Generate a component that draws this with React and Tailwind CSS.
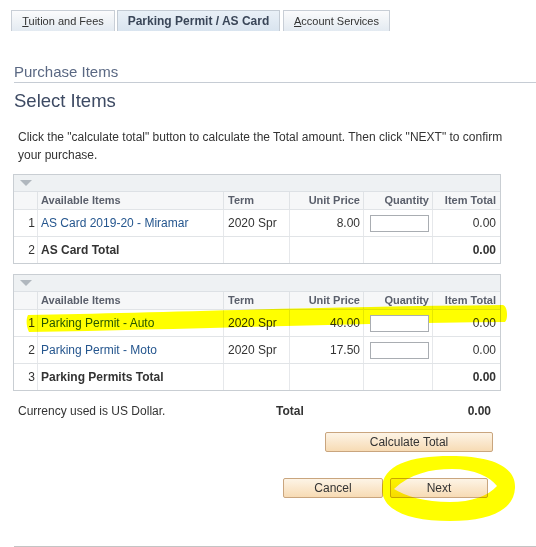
import React from 'react';

const cols = 'grid grid-cols-[23px_186px_66px_74px_69px_68px]';

const asCardRows = [
  { n: 1, name: 'AS Card 2019-20 - Miramar', term: '2020 Spr', price: '8.00', total: '0.00' },
];

const permitRows = [
  { n: 1, name: 'Parking Permit - Auto', term: '2020 Spr', price: '40.00', total: '0.00' },
  { n: 2, name: 'Parking Permit - Moto', term: '2020 Spr', price: '17.50', total: '0.00' },
];

function Tab({ children, active }) {
  if (active) {
    return (
      <div className="h-[21px] w-[163px] flex items-center justify-center border border-b-0 border-[#c3cbd4] bg-gradient-to-b from-[#e9f0f7] to-[#d9e4ef] text-[12px] font-bold text-[#3a4658]">
        {children}
      </div>
    );
  }
  return (
    <div className="h-[21px] flex items-center justify-center border border-b-0 border-[#c8ced6] bg-gradient-to-b from-[#fbfbfc] to-[#e3eaf1] text-[11px] text-[#333]">
      {children}
    </div>
  );
}

function ItemTable({ rows, totalLabel, totalNum }) {
  return (
    <div className="ml-[13px] w-[488px] border border-[#c9ced3] text-[12px] text-[#333]">
      <div className="h-[16px] bg-[#eef1f3] flex items-center pl-[6px]">
        <svg width="12" height="6" viewBox="0 0 12 6">
          <path d="M0 0 L12 0 L6 6 Z" fill="#b0b7be" />
        </svg>
      </div>
      <div className={`${cols} h-[18px] bg-[#f6f7f8] border-t border-[#dde1e5] text-[11px] font-bold text-[#5a5f6b]`}>
        <div></div>
        <div className="border-l border-[#e0e3e6] pl-[3px] flex items-center">Available Items</div>
        <div className="border-l border-[#e0e3e6] pl-[4px] flex items-center">Term</div>
        <div className="border-l border-[#e0e3e6] pr-[3px] flex items-center justify-end">Unit Price</div>
        <div className="border-l border-[#e0e3e6] pr-[3px] flex items-center justify-end">Quantity</div>
        <div className="border-l border-[#e0e3e6] pr-[4px] flex items-center justify-end">Item Total</div>
      </div>
      {rows.map((r) => (
        <div key={r.n} className={`${cols} h-[27px] border-t border-[#e1e4e7]`}>
          <div className="flex items-center justify-end pr-[2px]">{r.n}</div>
          <div className="border-l border-[#e6e8eb] pl-[3px] flex items-center text-[#25568e]">{r.name}</div>
          <div className="border-l border-[#e6e8eb] pl-[4px] flex items-center">{r.term}</div>
          <div className="border-l border-[#e6e8eb] pr-[3px] flex items-center justify-end">{r.price}</div>
          <div className="border-l border-[#e6e8eb] pl-[6px] flex items-center">
            <input
              type="text"
              className="relative z-10 w-[59px] h-[17px] border border-[#a9adb2] bg-white outline-none"
            />
          </div>
          <div className="border-l border-[#e6e8eb] pr-[4px] flex items-center justify-end">{r.total}</div>
        </div>
      ))}
      <div className={`${cols} h-[27px] border-t border-[#e1e4e7]`}>
        <div className="flex items-center justify-end pr-[2px]">{totalNum}</div>
        <div className="border-l border-[#e6e8eb] pl-[3px] flex items-center font-bold">{totalLabel}</div>
        <div className="border-l border-[#e6e8eb]"></div>
        <div className="border-l border-[#e6e8eb]"></div>
        <div className="border-l border-[#e6e8eb]"></div>
        <div className="border-l border-[#e6e8eb] pr-[4px] flex items-center justify-end font-bold">0.00</div>
      </div>
    </div>
  );
}

function Btn({ children, width }) {
  return (
    <button className={`${width} h-[20px] rounded-[2px] border border-[#c9a57e] bg-gradient-to-b from-[#fdf4e6] to-[#f7dbb4] text-[12px] text-[#333] flex items-center justify-center`}>
      {children}
    </button>
  );
}

export default function App() {
  return (
    <div className="relative w-[536px] h-[547px] bg-white overflow-hidden font-['Liberation_Sans',Arial,sans-serif]">
      <div className="flex gap-[2px] pt-[10px] pl-[11px]">
        <div className="w-[104px]">
          <Tab><span><span className="underline">T</span>uition and Fees</span></Tab>
        </div>
        <Tab active>Parking Permit / AS Card</Tab>
        <div className="w-[107px] ml-[1px]">
          <Tab><span><span className="underline">A</span>ccount Services</span></Tab>
        </div>
      </div>

      <div className="mt-[31px] ml-[14px] h-[21px] border-b border-[#c6ccd4] text-[15px] leading-[20px] text-[#5a6883]">
        Purchase Items
      </div>
      <div className="mt-[6px] ml-[14px] text-[18.5px] leading-[24px] text-[#3d4a63]">Select Items</div>

      <p className="mt-[15px] ml-[18px] w-[510px] text-[12px] leading-[18px] text-[#333]">
        Click the "calculate total" button to calculate the Total amount. Then click "NEXT" to confirm your purchase.
      </p>

      <div className="mt-[10px]">
        <ItemTable rows={asCardRows} totalLabel="AS Card Total" totalNum={2} />
      </div>
      <div className="mt-[10px]">
        <ItemTable rows={permitRows} totalLabel="Parking Permits Total" totalNum={3} />
      </div>

      <div className="mt-[12px] flex items-center h-[16px] pl-[18px] pr-[45px] text-[12px] text-[#333]">
        <span className="w-[258px]">Currency used is US Dollar.</span>
        <span className="flex-1 font-bold">Total</span>
        <span className="font-bold">0.00</span>
      </div>

      <div className="mt-[13px] flex justify-end pr-[43px]">
        <Btn width="w-[168px]">Calculate Total</Btn>
      </div>

      <div className="mt-[26px] flex justify-end gap-[7px] pr-[48px]">
        <Btn width="w-[100px]">Cancel</Btn>
        <Btn width="w-[98px]">Next</Btn>
      </div>

      <div className="mt-[48px] ml-[14px] border-t border-[#c4c4c4]"></div>

      {/* highlighter marks drawn over the screenshot */}
      <svg
        className="absolute inset-0 pointer-events-none mix-blend-multiply"
        width="536"
        height="547"
        viewBox="0 0 536 547"
      >
        <path
          d="M28,315 C150,313 300,307 503,305 C508,306 508,320 505,322 C350,323 200,329 29,332 C26,326 26,319 28,315 Z"
          fill="#ffff00"
        />
        <path
          fillRule="evenodd"
          d="M382,489 C382,465 410,456 450,456 C495,456 516,468 515,488 C514,510 490,521 450,521 C408,521 382,510 382,489 Z M394,489 C410,474 430,469 452,469 C475,469 490,477 497,486 C488,496 472,502 450,502 C425,502 405,496 394,489 Z"
          fill="#ffff00"
        />
      </svg>
    </div>
  );
}
